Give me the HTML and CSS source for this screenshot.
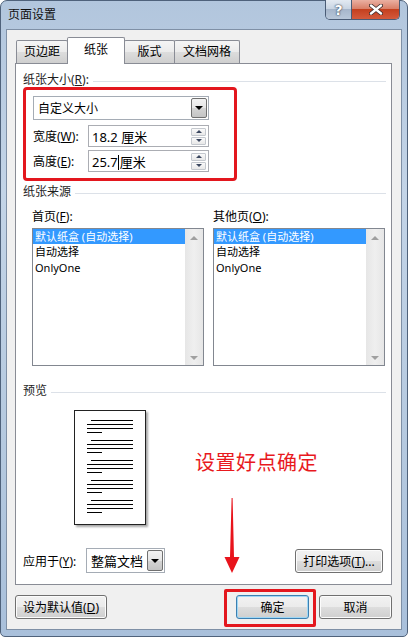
FILE: index.html
```html
<!DOCTYPE html>
<html lang="zh-CN">
<head>
    <meta charset="UTF-8">
    <meta name="viewport" content="width=device-width, initial-scale=1.0">
    <title>页面设置</title>
    <link rel="stylesheet" href="styles.css">
</head>
<body>

<div class="window">
    <div class="titlebar">
        <span class="title">页面设置</span>
        <div class="caption-buttons">
            <span class="cap-btn help">?</span>
            <span class="cap-btn close">
                <svg width="14" height="11" viewBox="0 0 14 11"><path d="M2 1.5 L12 9.5 M12 1.5 L2 9.5" stroke="#3b2a2a" stroke-width="4" stroke-linecap="round"/><path d="M2 1.5 L12 9.5 M12 1.5 L2 9.5" stroke="#fff" stroke-width="2.4" stroke-linecap="round"/></svg>
            </span>
        </div>
    </div>

    <div class="client">
        <div class="tabs">
            <div class="tab t1">页边距</div>
            <div class="tab t2 active">纸张</div>
            <div class="tab t3">版式</div>
            <div class="tab t4">文档网格</div>
        </div>

        <div class="panel">
            <div class="group-title first"><span>纸张大小(<u>R</u>):</span></div>

            <div class="red-box">
                <div class="combo size-combo">
                    <span class="combo-text">自定义大小</span>
                    <span class="drop"><i></i></span>
                </div>
                <div class="field-row">
                    <label>宽度(<u>W</u>):</label>
                    <div class="spin">
                        <span class="spin-text">18.2 厘米</span>
                        <span class="spin-btns"><b class="up"></b><b class="down"></b></span>
                    </div>
                </div>
                <div class="field-row tight">
                    <label>高度(<u>E</u>):</label>
                    <div class="spin">
                        <span class="spin-text">25.7<span class="caret"></span>厘米</span>
                        <span class="spin-btns"><b class="up"></b><b class="down"></b></span>
                    </div>
                </div>
            </div>

            <div class="group-title second"><span>纸张来源</span></div>

            <div class="sources">
                <div class="source">
                    <label>首页(<u>F</u>):</label>
                    <div class="listbox">
                        <ul>
                            <li class="selected">默认纸盒 (自动选择)</li>
                            <li>自动选择</li>
                            <li>OnlyOne</li>
                        </ul>
                        <div class="scrollbar"><i class="up"></i><i class="down"></i></div>
                    </div>
                </div>
                <div class="source">
                    <label>其他页(<u>O</u>):</label>
                    <div class="listbox">
                        <ul>
                            <li class="selected">默认纸盒 (自动选择)</li>
                            <li>自动选择</li>
                            <li>OnlyOne</li>
                        </ul>
                        <div class="scrollbar"><i class="up"></i><i class="down"></i></div>
                    </div>
                </div>
            </div>

            <div class="group-title third"><span>预览</span></div>

            <div class="page">
                <div class="para"><i class="l1"></i><i></i><i></i><i class="l4"></i></div>
                <div class="para"><i class="l1"></i><i></i><i></i><i class="l4"></i></div>
                <div class="para"><i class="l1"></i><i></i><i></i><i class="l4"></i></div>
                <div class="para"><i class="l1"></i><i></i><i></i><i class="l4"></i></div>
                <div class="para"><i class="l1"></i><i></i><i></i><i class="l4"></i></div>
            </div>

            <div class="apply-row">
                <label>应用于(<u>Y</u>):</label>
                <div class="combo apply-combo">
                    <span class="combo-text">整篇文档</span>
                    <span class="drop"><i></i></span>
                </div>
                <button class="btn print-btn">打印选项(<u>T</u>)...</button>
            </div>

            <!-- annotation drawn over the dialog -->
            <div class="note">设置好点确定</div>
            <svg class="arrow" width="18" height="78" viewBox="0 0 18 78">
                <path d="M8.6 1 L9.6 1 L11 60 L16.5 60 L9 76 L1.5 60 L7 60 Z" fill="#e8141c"/>
            </svg>
        </div>

        <div class="footer">
            <button class="btn default-btn">设为默认值(<u>D</u>)</button>
            <button class="btn ok-btn">确定<span class="ok-mark"></span></button>
            <button class="btn cancel-btn">取消</button>
        </div>
    </div>
</div>

</body>
</html>
```

FILE: styles.css
```css
* {
    box-sizing: border-box;
}
body {
    margin: 0;
    font-family: "Noto Sans", "Noto Sans CJK SC", sans-serif;
    font-size: 12px;
    color: #000;
    background: #fff;
}
u {
    text-decoration: underline;
}
.window {
    width: 408px;
    height: 637px;
    display: flex;
    flex-direction: column;
    background: linear-gradient(to bottom, #b2c6dd, #c3d4e7 30%, #b5c9df 70%, #a9c0db);
    border: 1px solid #4f627b;
    border-radius: 7px 7px 5px 5px;
    padding: 0 5px 6px;
}
.titlebar {
    height: 28px;
    display: flex;
    justify-content: space-between;
    align-items: flex-start;
}
.title {
    padding: 5px 0 0 2px;
    line-height: 18px;
    font-size: 12px;
    color: #111;
}
.caption-buttons {
    display: flex;
    margin-top: -1px;
    margin-right: 2px;
    border: 1px solid #4a5c76;
    border-top: none;
    border-radius: 0 0 5px 5px;
    overflow: hidden;
}
.cap-btn {
    height: 19px;
    display: flex;
    align-items: center;
    justify-content: center;
}
.help {
    width: 26px;
    border-right: 1px solid #4a5c76;
    background: linear-gradient(to bottom, #e3eaf2, #c9d5e3 45%, #a6b6cb 50%, #b8c7d9);
    color: #fff;
    font-weight: bold;
    font-size: 14px;
    font-family: "DejaVu Sans", sans-serif;
    text-shadow: 0 0 2px #2d3b4f, 0 0 1px #2d3b4f;
}
.close {
    width: 47px;
    background: linear-gradient(to bottom, #eab0a2, #d98069 45%, #c4401f 50%, #d45a3c);
}
.client {
    flex: 1;
    display: flex;
    flex-direction: column;
    background: #f0f0f0;
    border: 1px solid #7f90a6;
}
.tabs {
    display: flex;
    align-items: flex-end;
    height: 33px;
    padding-left: 9px;
}
.tab {
    height: 23px;
    line-height: 21px;
    text-align: center;
    border: 1px solid #898c95;
    border-bottom: none;
    border-radius: 2px 2px 0 0;
    background: linear-gradient(to bottom, #f5f5f5, #ebebeb 50%, #dddddd 51%, #cfcfcf);
    margin-right: -1px;
}
.tab.active {
    height: 27px;
    line-height: 24px;
    background: #fff;
    margin-bottom: -1px;
    position: relative;
    z-index: 1;
}
.t1 { width: 52px; }
.t2 { width: 58px; }
.t3 { width: 51px; }
.t4 { width: 66px; }

.panel {
    position: relative;
    height: 522px;
    margin: 0 9px 0 8px;
    background: #fff;
    border: 1px solid #898c95;
    display: flex;
    flex-direction: column;
}
.group-title {
    display: flex;
    align-items: center;
    height: 16px;
    line-height: 16px;
    margin: 0 5px 0 7px;
    color: #1e1e1e;
}
.group-title::after {
    content: "";
    flex: 1;
    height: 1px;
    margin-left: 4px;
    margin-top: 2px;
    background: #dce1e8;
}
.group-title.first {
    margin-top: 8px;
}
.group-title.second {
    margin-top: 3px;
}
.group-title.third {
    margin-top: 17px;
}

.red-box {
    width: 214px;
    height: 94px;
    margin: -1px 0 0 7px;
    border: 3px solid #e3171e;
    border-radius: 4px;
    padding: 6px 0 0 7px;
}
.combo {
    display: flex;
    align-items: center;
    background: #fff;
    border: 1px solid #a5acb5;
    padding: 1px;
}
.combo-text {
    flex: 1;
    padding-left: 3px;
}
.size-combo {
    width: 176px;
    height: 24px;
}
.drop {
    width: 16px;
    align-self: stretch;
    border: 1px solid #707070;
    border-radius: 2px;
    background: linear-gradient(to bottom, #f2f2f2, #e6e6e6 50%, #d4d4d4 51%, #c4c4c4);
    display: flex;
    align-items: center;
    justify-content: center;
}
.drop i {
    width: 0;
    height: 0;
    border-left: 4px solid transparent;
    border-right: 4px solid transparent;
    border-top: 4px solid #000;
}
.field-row {
    display: flex;
    align-items: center;
    margin-top: 5px;
}
.field-row.tight {
    margin-top: 3px;
}
.field-row label {
    width: 55px;
}
.spin {
    width: 121px;
    height: 22px;
    display: flex;
    align-items: center;
    border: 1px solid #abadb3;
    padding: 1px 1px 1px 0;
}
.spin-text {
    flex: 1;
    padding-left: 3px;
    font-size: 13px;
}
.caret {
    display: inline-block;
    width: 1px;
    height: 15px;
    background: #000;
    vertical-align: -3px;
    margin-right: 1px;
}
.spin-btns {
    width: 15px;
    display: flex;
    flex-direction: column;
    gap: 1px;
    margin-right: 1px;
}
.spin-btns b {
    height: 8px;
    border: 1px solid #c4c8ce;
    border-radius: 1px;
    background: linear-gradient(to bottom, #fafafa, #e8e8e8);
    display: flex;
    align-items: center;
    justify-content: center;
}
.spin-btns b::after {
    content: "";
    border-left: 3px solid transparent;
    border-right: 3px solid transparent;
}
.spin-btns .up::after {
    border-bottom: 3px solid #3c4860;
}
.spin-btns .down::after {
    border-top: 3px solid #3c4860;
}

.sources {
    display: flex;
    gap: 9px;
    margin: 9px 0 0 16px;
}
.source label {
    display: block;
    height: 16px;
    line-height: 16px;
    margin-bottom: 3px;
}
.listbox {
    width: 172px;
    height: 138px;
    border: 1px solid #828790;
    display: flex;
}
.listbox ul {
    flex: 1;
    list-style: none;
    margin: 0;
    padding: 0;
}
.listbox li {
    height: 16px;
    line-height: 16px;
    padding-left: 2px;
    font-size: 11px;
    white-space: nowrap;
}
.listbox li.selected {
    height: 15px;
    background: #3399ff;
    color: #fff;
}
.scrollbar {
    width: 18px;
    background: linear-gradient(to right, #e6e6e6, #efefef 50%, #e6e6e6);
    display: flex;
    flex-direction: column;
    justify-content: space-between;
    align-items: center;
    padding: 7px 0 5px;
}
.scrollbar i {
    width: 0;
    height: 0;
    border-left: 4px solid transparent;
    border-right: 4px solid transparent;
}
.scrollbar .up {
    border-bottom: 4px solid #a0a0a0;
}
.scrollbar .down {
    border-top: 4px solid #a0a0a0;
}

.page {
    width: 72px;
    height: 115px;
    margin: 11px 0 0 58px;
    border: 1px solid #222;
    background: #fff;
    box-shadow: 2px 2px 2px rgba(0, 0, 0, 0.35);
    padding: 9px 12px 0 12px;
}
.para {
    display: flex;
    flex-direction: column;
    gap: 3px;
    margin-bottom: 7px;
}
.para i {
    display: block;
    height: 1px;
    background: #000;
}
.para .l1 {
    margin-left: 4px;
}
.para .l4 {
    width: 15px;
}

.apply-row {
    display: flex;
    align-items: center;
    margin: 23px 8px 0 7px;
}
.apply-row label {
    width: 63px;
}
.apply-combo {
    width: 79px;
    height: 25px;
    font-size: 13px;
}
.btn {
    font-family: inherit;
    font-size: 12px;
    color: #000;
    height: 24px;
    padding: 0;
    border: 1px solid #707070;
    border-radius: 3px;
    background: linear-gradient(to bottom, #f2f2f2, #ebebeb 50%, #dddddd 51%, #cfcfcf);
    box-shadow: inset 0 0 0 1px #fcfcfc;
}
.print-btn {
    width: 88px;
    margin-left: auto;
}

.note {
    position: absolute;
    left: 179px;
    top: 387px;
    font-size: 20px;
    line-height: 24px;
    color: #e8191e;
    letter-spacing: 0.5px;
}
.arrow {
    position: absolute;
    left: 207px;
    top: 433px;
}

.footer {
    display: flex;
    align-items: center;
    margin: 10px 9px 0 8px;
}
.default-btn {
    width: 92px;
}
.ok-btn {
    position: relative;
    width: 73px;
    margin-left: auto;
    border-color: #3c7fb1;
    box-shadow: inset 0 0 0 1px #9fd7f5;
}
.cancel-btn {
    width: 73px;
    margin-left: 10px;
}
.ok-mark {
    position: absolute;
    left: -13px;
    top: -7px;
    right: -8px;
    bottom: -9px;
    border: 3px solid #e3171e;
    border-radius: 2px;
}
```
